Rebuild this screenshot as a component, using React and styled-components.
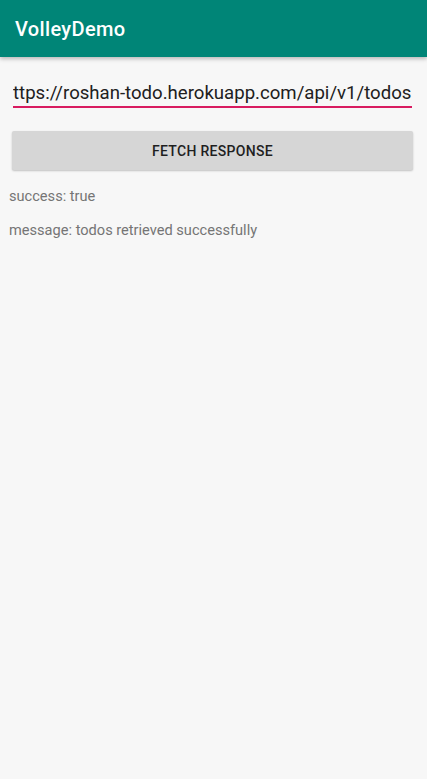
import React from "react";
import styled, { createGlobalStyle } from "styled-components";

const Global = createGlobalStyle`
  html, body { margin: 0; padding: 0; background: #f7f7f7; }
  body { font-family: Roboto, "Noto Sans", sans-serif; }
  #root { min-height: 779px; }
`;

const Screen = styled.div`
  width: 427px;
  height: 779px;
  background: #f7f7f7;
  display: flex;
  flex-direction: column;
  overflow: hidden;
`;

const AppBar = styled.header`
  height: 57px;
  background: #008577;
  display: flex;
  align-items: center;
  padding: 0 15px;
  box-shadow: 0 2px 4px rgba(0, 0, 0, 0.25);
  position: relative;
  z-index: 1;
`;

const Title = styled.h1`
  margin: 0;
  font-family: Roboto, sans-serif;
  font-weight: 500;
  font-size: 20px;
  color: #ffffff;
  letter-spacing: 0.35px;
`;

const Content = styled.main`
  display: flex;
  flex-direction: column;
  padding: 24px 0 0;
`;

const Field = styled.div`
  margin: 0 15px 0 13px;
  padding-bottom: 1px;
  border-bottom: 2px solid #d81b60;
  overflow: hidden;
  white-space: nowrap;
`;

const FieldText = styled.span`
  font-size: 18.6px;
  line-height: 24px;
  color: #202020;
  font-family: Roboto, sans-serif;
`;

const Button = styled.button`
  margin: 23px 14px 0 12px;
  height: 39px;
  border: none;
  border-radius: 2px;
  background: #d6d6d6;
  box-shadow: 0 1px 2px rgba(0, 0, 0, 0.22);
  font-family: Roboto, sans-serif;
  font-weight: 500;
  font-size: 14px;
  letter-spacing: 0.3px;
  color: #1f1f1f;
  text-transform: uppercase;
`;

const Line = styled.p`
  margin: ${(p) => p.$top}px 0 0 9px;
  font-size: 14.6px;
  line-height: 18px;
  color: #757575;
  font-family: Roboto, sans-serif;
`;

export default function App() {
  return (
    <Screen>
      <Global />
      <AppBar>
        <Title>VolleyDemo</Title>
      </AppBar>
      <Content>
        <Field>
          <FieldText>ttps://roshan-todo.herokuapp.com/api/v1/todos</FieldText>
        </Field>
        <Button>Fetch Response</Button>
        <Line $top={17}>success: true</Line>
        <Line $top={16}>message: todos retrieved successfully</Line>
      </Content>
    </Screen>
  );
}
